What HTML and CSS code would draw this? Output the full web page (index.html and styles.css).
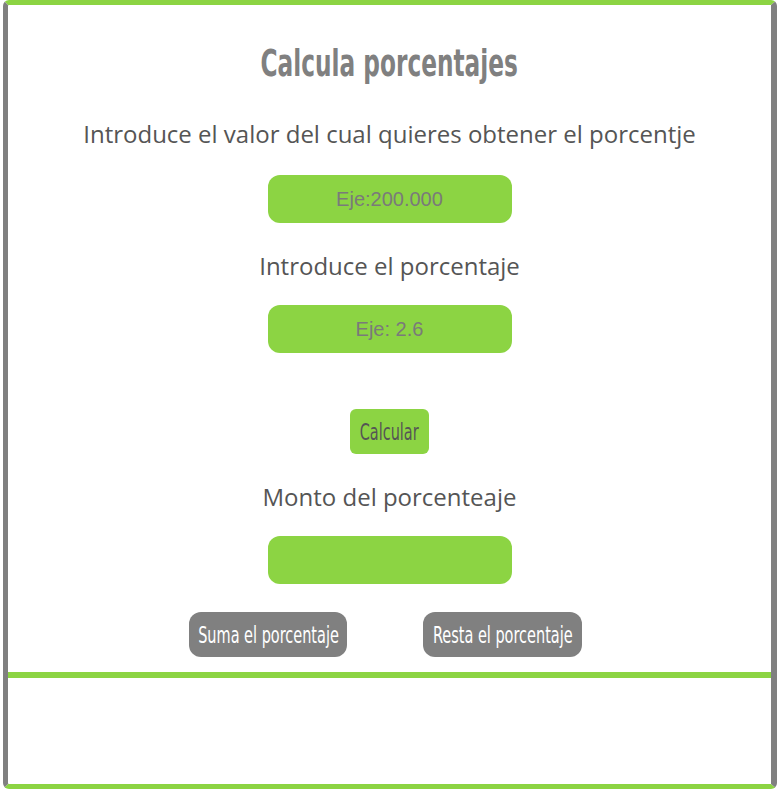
FILE: index.html
```html
<!DOCTYPE html>
<html lang="es">
<head>
<meta charset="utf-8">
<title>Calcula porcentajes</title>
<link rel="stylesheet" href="styles.css">
</head>
<body>
<div class="frame">
  <main class="calc">
    <h1 class="title"><span class="squeeze">Calcula porcentajes</span></h1>
    <p class="label first">Introduce el valor del cual quieres obtener el porcentje</p>
    <input class="field" type="text" placeholder="Eje:200.000">
    <p class="label">Introduce el porcentaje</p>
    <input class="field" type="text" placeholder="Eje: 2.6">
    <button class="calc-btn" type="button"><span class="squeeze">Calcular</span></button>
    <p class="label">Monto del porcenteaje</p>
    <input class="field" type="text">
    <div class="actions">
      <button class="gray-btn" type="button"><span class="squeeze">Suma el porcentaje</span></button>
      <button class="gray-btn wide" type="button"><span class="squeeze">Resta el porcentaje</span></button>
    </div>
  </main>
  <section class="result"></section>
</div>
</body>
</html>
```
FILE: styles.css
```css
html, body {
  margin: 0;
  padding: 0;
  background: #ffffff;
}
body {
  padding: 0 5px 1px 3px;
}
.frame {
  border-style: solid;
  border-width: 5px 6px 5px 5px;
  border-color: #8cd443 #808080 #8cd443 #808080;
  border-radius: 6px;
  height: 789px;
  box-sizing: border-box;
}
.calc {
  display: flex;
  flex-direction: column;
  align-items: center;
  padding-top: 33px;
  padding-bottom: 15px;
}
.title {
  margin: 0;
  font-family: "DejaVu Sans", sans-serif;
  font-stretch: condensed;
  font-weight: bold;
  font-size: 38px;
  line-height: 50px;
  color: #808080;
  height: 50px;
  display: flex;
  justify-content: center;
}
.squeeze {
  display: inline-block;
  transform: scaleX(0.7);
  white-space: nowrap;
}
.title .squeeze {
  transform: scaleX(0.68);
}
.label {
  margin: 28px 0 0;
  font-family: "Open Sans", sans-serif;
  font-size: 24px;
  line-height: 30px;
  color: #555555;
}
.label.first {
  margin-top: 31px;
}
.label.first + .field {
  margin-top: 26px;
}
.field {
  display: block;
  margin-top: 24px;
  width: 244px;
  height: 48px;
  box-sizing: border-box;
  border: none;
  border-radius: 12px;
  background: #8cd443;
  text-align: center;
  font-family: "Liberation Sans", Arial, sans-serif;
  font-size: 20px;
  color: #777777;
  outline: none;
}
.field::placeholder {
  color: #7a7a7a;
  opacity: 1;
}
.calc-btn {
  margin-top: 56px;
  width: 79px;
  height: 45px;
  border: none;
  border-radius: 6px;
  background: #8cd443;
  color: #555555;
  font-family: "DejaVu Sans", sans-serif;
  font-stretch: condensed;
  font-size: 23px;
  padding: 0;
  display: flex;
  align-items: center;
  justify-content: center;
}
.calc-btn + .label {
  margin-top: 28px;
}
.actions {
  display: flex;
  gap: 76px;
  margin-top: 28px;
  padding-right: 8px;
}
.gray-btn {
  width: 158px;
  height: 45px;
  border: none;
  border-radius: 12px;
  background: #808080;
  color: #ffffff;
  font-family: "DejaVu Sans", sans-serif;
  font-stretch: condensed;
  font-size: 23px;
  padding: 0;
  display: flex;
  align-items: center;
  justify-content: center;
}
.gray-btn.wide {
  width: 159px;
}
.result {
  border-top: 6px solid #8cd443;
}
```
